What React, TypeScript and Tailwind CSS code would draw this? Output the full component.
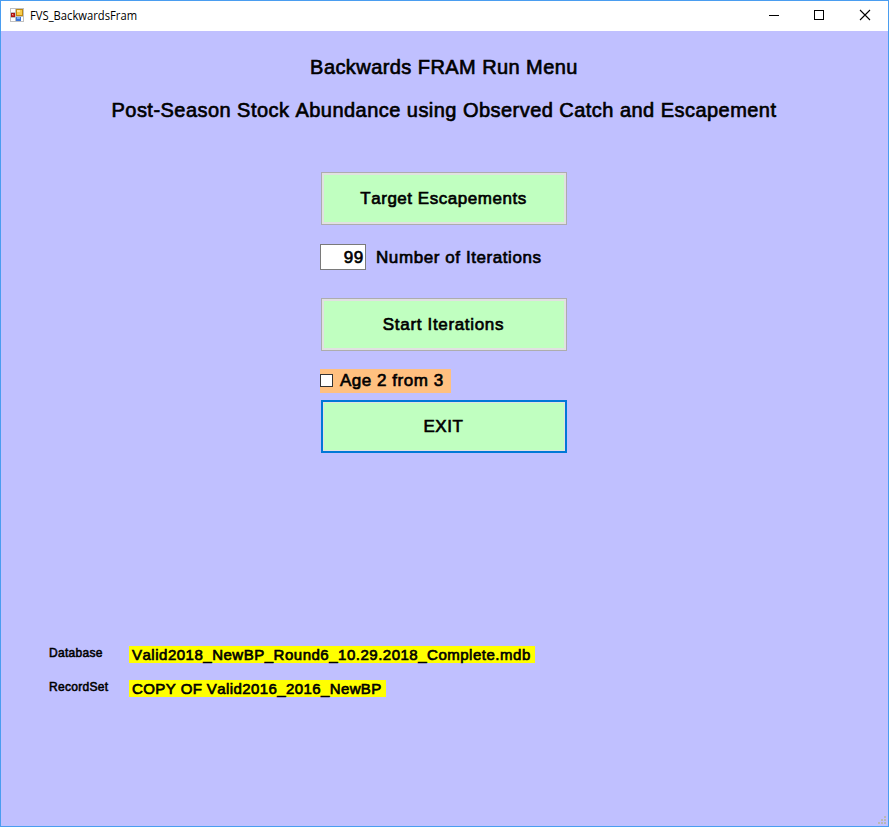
import type { ReactNode } from "react";

const BOLD = "whitespace-nowrap [-webkit-text-stroke:0.65px_#000] [font-kerning:none]";

function AppIcon() {
  return (
    <svg className="mb-[2px]" width="14" height="14" viewBox="0 0 14 14" shapeRendering="crispEdges">
      <rect width="14" height="14" fill="#c0c0c0" />
      <rect x="1" y="1" width="4" height="3" fill="#fff" />
      <rect x="1" y="10" width="4" height="3" fill="#fff" />
      <rect x="1" y="5" width="4" height="4" fill="#a81515" />
      <rect x="2" y="6" width="2" height="2" fill="#d63a30" />
      <rect x="2" y="6" width="1" height="1" fill="#f09a90" />
      <rect x="6" y="1" width="7" height="7" fill="#c08a10" />
      <rect x="7" y="2" width="5" height="5" fill="#f8cc4c" />
      <rect x="7" y="2" width="3" height="2" fill="#ffe79a" />
      <rect x="6" y="9" width="5" height="4" fill="#3b74d8" />
      <rect x="7" y="9" width="3" height="2" fill="#7fb0f5" />
      <rect x="11" y="9" width="2" height="4" fill="#fff" />
    </svg>
  );
}

function TitleBar() {
  return (
    <header className="flex h-[30px] items-center bg-white pl-[9px]">
      <AppIcon />
      <span className="ml-[6px] origin-left scale-x-[0.935] whitespace-nowrap font-['Open_Sans',sans-serif] text-[12px] leading-[16px]">
        FVS_BackwardsFram
      </span>
      <svg className="ml-auto" width="136" height="30" viewBox="0 0 136 30" stroke="#000" fill="none">
        <path d="M17 14.5h10M62.5 9.5h9v9h-9z" shapeRendering="crispEdges" />
        <path d="M108 9l10 10M118 9l-10 10" strokeWidth="1.1" />
      </svg>
    </header>
  );
}

interface MenuButtonProps {
  children: ReactNode;
  className?: string;
  focused?: boolean;
}

function MenuButton({ children, className = "", focused = false }: MenuButtonProps) {
  const frame = focused
    ? "border-2 border-[#0078d7] shadow-[inset_0_0_0_1px_#e1e1e1]"
    : "border border-[#adadad] shadow-[inset_0_0_0_2px_#e1e1e1]";
  return (
    <button
      className={`ml-px flex h-[53px] w-[246px] items-center justify-center bg-[#c0ffc0] pr-px text-[17px] ${frame} ${BOLD} ${className}`}
    >
      {children}
    </button>
  );
}

function InfoRow({ label, value, valueClass }: { label: string; value: string; valueClass: string }) {
  return (
    <div className="flex h-[17px] items-center">
      <span className="-mt-[4px] w-[80px] whitespace-nowrap text-[12px] leading-[14px] tracking-[0.3px] [-webkit-text-stroke:0.55px_#000]">
        {label}
      </span>
      <span className={`h-[17px] bg-[#ffff00] pl-[3px] text-[15px] leading-[18px] ${valueClass} ${BOLD}`}>{value}</span>
    </div>
  );
}

export default function App() {
  return (
    <div className="relative flex h-[827px] w-[889px] flex-col border border-[#4a9df0] bg-[#c0c0ff] font-['Liberation_Sans',Arial,sans-serif] text-black">
      <TitleBar />
      <main className="flex flex-col">
        <h1 className={`mt-[24px] pr-px text-center text-[20px] leading-[24px] tracking-[0.43px] ${BOLD}`}>
          Backwards FRAM Run Menu
        </h1>
        <h2 className={`mt-[19px] pr-px text-center text-[20px] leading-[24px] tracking-[0.46px] ${BOLD}`}>
          Post-Season Stock Abundance using Observed Catch and Escapement
        </h2>
        <section className="ml-[319px] mt-[50px] flex flex-col items-start">
          <MenuButton className="tracking-[0.53px]">Target Escapements</MenuButton>
          <div className="mt-[19px] flex h-[26px] items-center">
            <input
              className={`h-[26px] w-[46px] border border-[#7a7a7a] bg-white pr-px pt-px text-right text-[17px] tracking-[0.7px] ${BOLD}`}
              defaultValue="99"
            />
            <span className={`ml-[10px] pt-px text-[17px] leading-[20px] tracking-[0.58px] ${BOLD}`}>Number of Iterations</span>
          </div>
          <MenuButton className="mt-[28px] tracking-[0.67px]">Start Iterations</MenuButton>
          <label className="mt-[18px] flex h-[24px] w-[131px] items-center bg-[#ffc080]">
            <input type="checkbox" className="mb-px size-[13px] shrink-0 appearance-none border border-[#333] bg-white" />
            <span className={`ml-[7px] text-[17px] leading-[20px] tracking-[0.53px] ${BOLD}`}>Age 2 from 3</span>
          </label>
          <MenuButton className="mt-[7px] tracking-[0.6px]" focused>
            EXIT
          </MenuButton>
        </section>
        <section className="ml-[48px] mt-[193px] flex flex-col gap-[17px]">
          <InfoRow
            label="Database"
            value="Valid2018_NewBP_Round6_10.29.2018_Complete.mdb"
            valueClass="w-[406px] tracking-[0.51px]"
          />
          <InfoRow label="RecordSet" value="COPY OF Valid2016_2016_NewBP" valueClass="w-[257px] tracking-[0.4px]" />
        </section>
      </main>
      <svg className="absolute bottom-[1px] right-[1px]" width="9" height="9" fill="#b9b8b4" shapeRendering="crispEdges">
        <path d="M6 0h2v2h-2zM3 3h2v2h-2zM6 3h2v2h-2zM0 6h2v2h-2zM3 6h2v2h-2zM6 6h2v2h-2z" />
      </svg>
    </div>
  );
}
